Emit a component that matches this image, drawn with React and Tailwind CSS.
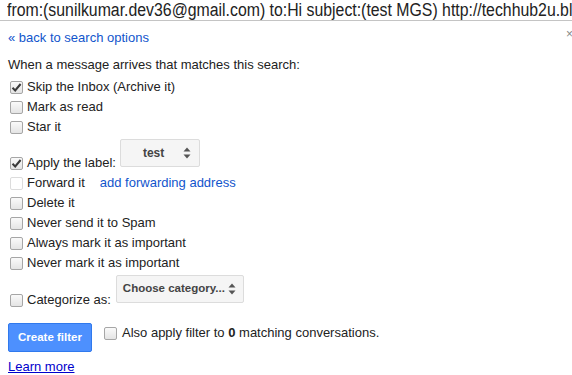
import React from 'react';

const Check = ({ checked = false, disabled = false }) => (
  <span
    className={`flex h-[13px] w-[13px] shrink-0 items-center justify-center rounded-[2px] border ${
      disabled
        ? 'border-[#dcdcdc] bg-white'
        : 'border-[#a6a6a6] bg-gradient-to-b from-[#fafafa] to-[#e4e4e4]'
    }`}
  >
    {checked && (
      <svg width="11" height="11" viewBox="0 0 11 11">
        <path d="M1.5 5.8 L4.2 8.5 L9.6 2" fill="none" stroke="#3a3a3a" strokeWidth="2" />
      </svg>
    )}
  </span>
);

const Arrows = () => (
  <svg width="8" height="12" viewBox="0 0 8 12" className="shrink-0">
    <path d="M4 0.5 L7.5 4.5 L0.5 4.5 Z" fill="#555" />
    <path d="M4 11.5 L7.5 7.5 L0.5 7.5 Z" fill="#555" />
  </svg>
);

const Row = ({ label, checked, disabled, children }) => (
  <div className="flex h-[20px] items-center">
    <div className="ml-[2px]">
      <Check checked={checked} disabled={disabled} />
    </div>
    <span className="ml-[4px]">{label}</span>
    {children}
  </div>
);

const App = () => {
  return (
    <div
      className="relative h-[375px] w-[572px] overflow-hidden bg-white text-[13px] text-[#222]"
      style={{ fontFamily: '"Liberation Sans", Arial, sans-serif' }}
    >
      <div className="h-[21px] overflow-hidden whitespace-nowrap border-b border-[#c4c4c4] pl-[7px]">
        <span className="inline-block origin-left scale-x-[0.88] text-[18px] leading-[20px] text-[#222]">
          from:(sunilkumar.dev36@gmail.com) to:Hi subject:(test MGS) http://techhub2u.blo
        </span>
      </div>

      <span className="absolute left-[566px] top-[28px] text-[12px] leading-[12px] text-[#888]">×</span>

      <div className="flex flex-col pl-[8px]">
        <div className="mt-[7px] flex h-[20px] items-center text-[#15c]">« back to search options</div>
        <div className="mt-[7px] flex h-[20px] items-center">When a message arrives that matches this search:</div>

        <div className="mt-[2px] flex flex-col">
          <Row label="Skip the Inbox (Archive it)" checked />
          <Row label="Mark as read" />
          <Row label="Star it" />
        </div>

        <div className="mt-[2px] flex h-[34px] items-start">
          <div className="mt-[14px]">
            <Row label="Apply the label:" checked />
          </div>
          <div className="ml-[4px] flex h-[28px] w-[80px] items-center justify-between rounded-[2px] border border-[#dcdcdc] bg-[#f5f5f5] pl-[22px] pr-[8px] text-[12px] font-bold text-[#444]">
            <span>test</span>
            <Arrows />
          </div>
        </div>

        <Row label="Forward it" disabled>
          <span className="ml-[15px] text-[#15c]">add forwarding address</span>
        </Row>
        <Row label="Delete it" />
        <Row label="Never send it to Spam" />
        <Row label="Always mark it as important" />
        <Row label="Never mark it as important" />

        <div className="mt-[2px] flex h-[35px] items-start">
          <div className="mt-[15px]">
            <Row label="Categorize as:" />
          </div>
          <div className="ml-[5px] flex h-[28px] w-[128px] items-center justify-between rounded-[2px] border border-[#dcdcdc] bg-[#f5f5f5] pl-[6px] pr-[7px] text-[11.5px] font-bold text-[#444]">
            <span>Choose category...</span>
            <Arrows />
          </div>
        </div>

        <div className="mt-[13px] flex items-start">
          <button
            type="button"
            className="flex h-[29px] w-[84px] items-center justify-center rounded-[2px] border border-[#3079ed] bg-[#4d90fe] text-[11.5px] font-bold text-white"
          >
            Create filter
          </button>
          <div className="ml-[12px] flex h-[20px] items-center">
            <Check />
            <span className="ml-[5px]">
              Also apply filter to <b>0</b> matching conversations.
            </span>
          </div>
        </div>

        <div className="mt-[5px] flex h-[20px] items-center">
          <span className="text-[#0000cc] underline">Learn more</span>
        </div>
      </div>
    </div>
  );
};

export default App;
